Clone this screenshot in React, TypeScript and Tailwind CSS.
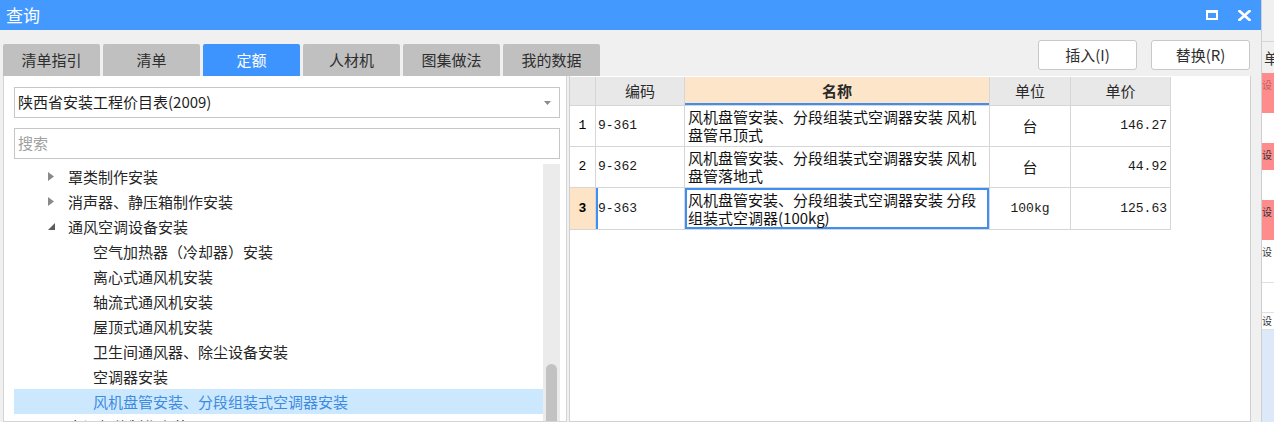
const tabs = ['清单指引', '清单', '定额', '人材机', '图集做法', '我的数据'];

type TreeItem = { level: 1 | 2; label: string; state?: 'closed' | 'open'; selected?: boolean };

const tree: TreeItem[] = [
  { level: 1, label: '罩类制作安装', state: 'closed' },
  { level: 1, label: '消声器、静压箱制作安装', state: 'closed' },
  { level: 1, label: '通风空调设备安装', state: 'open' },
  { level: 2, label: '空气加热器（冷却器）安装' },
  { level: 2, label: '离心式通风机安装' },
  { level: 2, label: '轴流式通风机安装' },
  { level: 2, label: '屋顶式通风机安装' },
  { level: 2, label: '卫生间通风器、除尘设备安装' },
  { level: 2, label: '空调器安装' },
  { level: 2, label: '风机盘管安装、分段组装式空调器安装', selected: true },
  { level: 1, label: '空调部件制作安装', state: 'closed' },
];

const rows = [
  { no: '1', code: '9-361', name: ['风机盘管安装、分段组装式空调器安装 风机', '盘管吊顶式'], unit: '台', price: '146.27' },
  { no: '2', code: '9-362', name: ['风机盘管安装、分段组装式空调器安装 风机', '盘管落地式'], unit: '台', price: '44.92' },
  { no: '3', code: '9-363', name: ['风机盘管安装、分段组装式空调器安装 分段', '组装式空调器(100kg)'], unit: '100kg', price: '125.63' },
];

const cjk = "font-['Noto_Sans_CJK_SC',sans-serif]";
const mono = "font-['Liberation_Mono','Noto_Sans_CJK_SC',monospace]";

function Caret({ state }: { state?: 'closed' | 'open' }) {
  if (state === 'open') {
    return (
      <svg width="7" height="7" viewBox="0 0 7 7">
        <path d="M7 0 L7 7 L0 7 Z" fill="#5c5c5c" />
      </svg>
    );
  }
  return (
    <svg width="6" height="9" viewBox="0 0 6 9">
      <path d="M0 0 L6 4.5 L0 9 Z" fill="#8a8a8a" />
    </svg>
  );
}

function TreeRow({ item }: { item: TreeItem }) {
  return (
    <div
      className={`flex h-[25px] shrink-0 items-center text-[15px] leading-[25px] ${
        item.selected ? 'bg-[#cce8ff] text-[#3c8be0]' : 'text-[#262626]'
      } ${item.level === 1 ? 'pl-[34px]' : 'pl-[79px]'}`}
    >
      {item.level === 1 && (
        <span className="flex w-[20px] items-center">
          <Caret state={item.state} />
        </span>
      )}
      <span className="whitespace-nowrap">{item.label}</span>
    </div>
  );
}

function LeftPanel() {
  return (
    <div className="ml-[3px] flex w-[564px] flex-col border border-t-0 border-[#d4d4d4] bg-white pl-[10px] pr-[6px]">
      <div className="mt-[11px] flex h-[31px] w-[546px] items-center justify-between border border-[#c6c6c6] pl-[3px] pr-[8px] text-[15px] text-[#1f1f1f]">
        <span>陕西省安装工程价目表(2009)</span>
        <svg width="7" height="4" viewBox="0 0 7 4">
          <path d="M0 0 L7 0 L3.5 4 Z" fill="#8c8c8c" />
        </svg>
      </div>
      <div className="mt-[10px] flex h-[31px] w-[546px] items-center border border-[#c6c6c6] pl-[3px] text-[15px] text-[#a0a0a0]">
        搜索
      </div>
      <div className="mt-[5px] flex min-h-0 flex-1 overflow-hidden">
        <div className="flex w-[529px] flex-col">
          {tree.map((item) => (
            <TreeRow key={item.label} item={item} />
          ))}
        </div>
        <div className="flex w-[17px] flex-col items-center bg-[#ebebeb]">
          <svg className="mt-[3px]" width="9" height="5" viewBox="0 0 9 5">
            <path d="M0 5 L4.5 0 L9 5 Z" fill="#8a8a8a" />
          </svg>
          <div className="mt-[197px] h-[80px] w-[11px] shrink-0 rounded-full bg-[#c2c2c2]" />
        </div>
      </div>
    </div>
  );
}

function HeaderCell({ children, active }: { children?: React.ReactNode; active?: boolean }) {
  return (
    <div
      className={`flex items-center justify-center border-r border-b border-[#d6d6d6] text-[15px] text-[#2a2a2a] ${
        active ? 'bg-[#fde5c9] font-bold shadow-[inset_0_-2px_0_#3f8ff2]' : 'bg-[#e8e8e8]'
      }`}
    >
      {children}
    </div>
  );
}

function DataTable() {
  return (
    <div className="ml-[2px] flex w-[682px] flex-col border border-t-0 border-[#d0d0d0] bg-white">
      <div className="mt-[1px] grid w-[601px] grid-cols-[26px_89px_305px_81px_100px] grid-rows-[29px_41px_41px_42px]">
        <HeaderCell />
        <HeaderCell>编码</HeaderCell>
        <HeaderCell active>名称</HeaderCell>
        <HeaderCell>单位</HeaderCell>
        <HeaderCell>单价</HeaderCell>
        {rows.map((r) => {
          const current = r.no === '3';
          return (
            <div key={r.no} className="contents">
              <div
                className={`flex items-center justify-center border-r border-b border-[#d6d6d6] text-[13px] ${mono} ${
                  current ? 'bg-[#fde4c6] font-bold' : ''
                }`}
              >
                {r.no}
              </div>
              <div
                className={`flex items-center border-r border-b border-[#d6d6d6] pl-[2px] text-[13px] text-[#1a1a1a] ${mono} ${
                  current ? 'shadow-[inset_2px_0_0_#3f8ff2]' : ''
                }`}
              >
                {r.code}
              </div>
              <div
                className={`flex flex-col justify-center border-r border-b border-[#d6d6d6] pl-[3px] text-[15px] leading-[18px] text-[#111] ${cjk} ${
                  current ? 'shadow-[inset_0_0_0_2px_#3f8ff2]' : ''
                }`}
              >
                {r.name.map((line) => (
                  <span key={line} className="whitespace-nowrap">
                    {line}
                  </span>
                ))}
              </div>
              <div
                className={`flex items-center justify-center border-r border-b border-[#d6d6d6] text-[#1a1a1a] ${
                  r.unit === '台' ? `text-[15px] ${cjk}` : `text-[13px] ${mono}`
                }`}
              >
                {r.unit}
              </div>
              <div
                className={`flex items-center justify-end border-r border-b border-[#d6d6d6] pr-[3px] text-[13px] text-[#1a1a1a] ${mono}`}
              >
                {r.price}
              </div>
            </div>
          );
        })}
      </div>
    </div>
  );
}

function Dialog() {
  return (
    <div className={`flex h-[422px] w-[1262px] shrink-0 flex-col border-r border-[#cfcfcf] bg-[#f0f0f0] ${cjk}`}>
      <div className="flex h-[30px] shrink-0 items-center justify-between bg-[#4499ff] pl-[6px] pr-[10px]">
        <span className="text-[17px] text-white">查询</span>
        <div className="flex items-center gap-[20px]">
          <div className="h-[10px] w-[12px] border-2 border-t-[3px] border-white" />
          <svg width="13" height="11" viewBox="0 0 13 11">
            <path d="M1.5 1 L11.5 10 M11.5 1 L1.5 10" stroke="white" strokeWidth="2.6" strokeLinecap="square" />
          </svg>
        </div>
      </div>
      <div className="flex h-[46px] shrink-0 justify-between">
        <div className="ml-[3px] flex gap-[3px] self-end">
          {tabs.map((t) => (
            <div
              key={t}
              className={`flex h-[32px] w-[97px] items-center justify-center rounded-t-[2px] text-[15px] ${
                t === '定额' ? 'bg-[#3d94fe] text-white' : 'bg-[#c0c0c0] text-[#2e2e2e]'
              }`}
            >
              {t}
            </div>
          ))}
        </div>
        <div className="mr-[11px] mt-[10px] flex gap-[14px]">
          {['插入(I)', '替换(R)'].map((b) => (
            <div
              key={b}
              className="flex h-[30px] w-[99px] items-center justify-center rounded-[3px] border border-[#c8c8c8] bg-white text-[15px] text-[#2e2e2e]"
            >
              {b}
            </div>
          ))}
        </div>
      </div>
      <div className="flex min-h-0 flex-1">
        <LeftPanel />
        <DataTable />
      </div>
    </div>
  );
}

// window behind the dialog, only a sliver of it shows on the right
function BackStrip() {
  return (
    <div className={`flex h-[422px] flex-1 flex-col overflow-hidden bg-white ${cjk}`}>
      <div className="h-[42px] shrink-0 border-b border-[#d6d6d6] bg-[#f0f0f0]" />
      <div className="h-[31px] shrink-0 overflow-hidden bg-[#f0f0f0] pl-[2px] text-[15px] leading-[31px] text-[#333]">
        单
      </div>
      <div className="h-[40px] shrink-0 overflow-hidden bg-[#ff8c8c] pt-[4px] text-[10px] leading-[16px] text-[#c06060]">
        设
      </div>
      <div className="h-[30px] shrink-0" />
      <div className="h-[27px] shrink-0 overflow-hidden bg-[#ff8c8c] pt-[4px] text-[10px] leading-[16px] text-[#333]">
        设
      </div>
      <div className="h-[30px] shrink-0" />
      <div className="h-[40px] shrink-0 overflow-hidden bg-[#ff8c8c] pt-[4px] text-[10px] leading-[16px] text-[#333]">
        设
      </div>
      <div className="h-[43px] shrink-0 overflow-hidden border-b border-[#e0e0e0] pt-[4px] text-[10px] leading-[16px] text-[#333]">
        设
      </div>
      <div className="h-[29px] shrink-0" />
      <div className="h-[18px] shrink-0 overflow-hidden border-t border-b border-[#e0e0e0] text-[10px] leading-[16px] text-[#333]">
        设
      </div>
      <div className="flex-1 bg-[#dde8f8]" />
    </div>
  );
}

export default function App() {
  return (
    <div className="flex h-[422px] w-[1274px] overflow-hidden">
      <Dialog />
      <BackStrip />
    </div>
  );
}
